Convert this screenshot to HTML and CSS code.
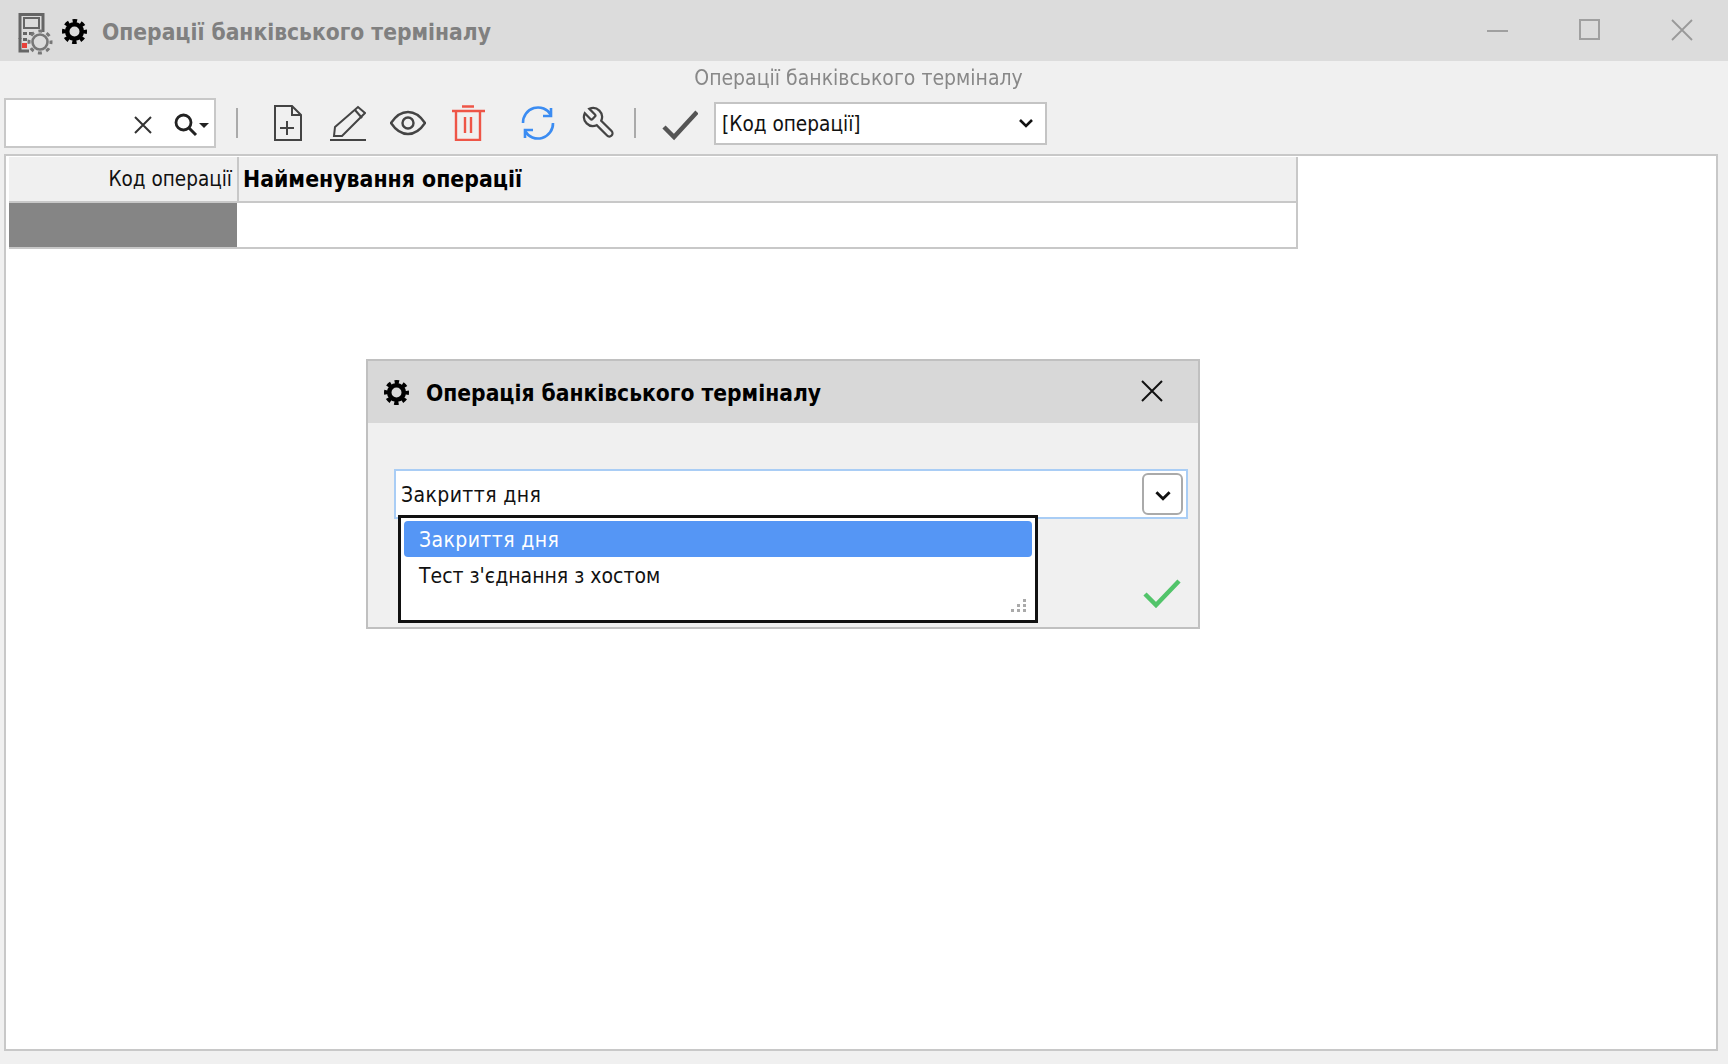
FILE: index.html
```html
<!DOCTYPE html>
<html lang="uk">
<head>
<meta charset="utf-8">
<title>Операції банківського терміналу</title>
<link rel="stylesheet" href="styles.css">
</head>
<body>
<svg class="defs" width="0" height="0" aria-hidden="true">
  <symbol id="gear" viewBox="0 0 24 24">
    <circle cx="12" cy="12" r="7" fill="none" stroke="currentColor" stroke-width="4.4"/>
    <circle cx="12" cy="12" r="10" fill="none" stroke="currentColor" stroke-width="4" stroke-dasharray="4.2 3.654" stroke-dashoffset="2.1"/>
  </symbol>
</svg>
<div class="window">
  <header class="titlebar">
    <svg class="app-icon" viewBox="0 0 36 44">
      <path d="M3 27V2.500H26V20" fill="none" stroke="#666" stroke-width="3"/>
      <path d="M3 26V39H12" fill="none" stroke="#666" stroke-width="3"/>
      <rect x="7" y="6" width="15" height="10" fill="none" stroke="#666" stroke-width="2"/>
      <path d="M6 20h4v3H6zM12 20h4v3h-4zM6 26h4v3H6z" fill="#666"/>
      <rect x="5" y="31" width="5" height="5" fill="#e8403a"/>
      <circle cx="23" cy="30" r="7.500" fill="none" stroke="#777" stroke-width="2.600"/>
      <circle cx="23" cy="30" r="11" fill="none" stroke="#777" stroke-width="3" stroke-dasharray="4 4.64" stroke-dashoffset="2"/>
    </svg>
    <svg class="title-gear"><use href="#gear"/></svg>
    <span class="title-text">Операції банківського терміналу</span>
    <div class="win-controls">
      <span class="win-min"></span>
      <span class="win-max"></span>
      <svg class="win-close" viewBox="0 0 22 22"><path d="M1 1L21 21M21 1L1 21" stroke="#999" stroke-width="1.800"/></svg>
    </div>
  </header>

  <div class="subtitle">Операції банківського терміналу</div>

  <div class="toolbar">
    <div class="search">
      <svg class="search-x" viewBox="0 0 20 20"><path d="M2 2L18 18M18 2L2 18" stroke="#333" stroke-width="2"/></svg>
      <svg class="search-glass" viewBox="0 0 24 24"><circle cx="9.500" cy="9.500" r="7.500" fill="none" stroke="#222" stroke-width="2.800"/><path d="M15 15L22 22" stroke="#222" stroke-width="3"/></svg>
      <span class="search-caret"></span>
    </div>
    <span class="sep sep-a"></span>
    <svg class="tool t-new" viewBox="0 0 36 36" fill="none" stroke="#444" stroke-width="2">
      <path d="M5 1H22L31 10V35H5Z"/><path d="M22 1V10H31"/><path d="M17 16V30M10 23H24"/>
    </svg>
    <svg class="tool t-edit" viewBox="0 0 36 36" fill="none" stroke="#444" stroke-width="2">
      <path d="M5 22L28 2L35 8L12 31H4Z"/><path d="M25 5L32 13"/><path d="M0 35H36"/>
    </svg>
    <svg class="tool t-view" viewBox="0 0 36 36" fill="none" stroke="#444" stroke-width="2.400">
      <path d="M1 18C7 9 13 7 18 7S29 9 35 18C29 27 23 29 18 29S7 27 1 18Z"/><circle cx="18" cy="18" r="5.500"/>
    </svg>
    <svg class="tool t-del" viewBox="0 0 36 36" fill="none" stroke="#ee5547" stroke-width="2.400">
      <path d="M2 6H35M12 1.500H24"/><path d="M6 6V35H30V6"/><path d="M15 12V28M21 12V28"/>
    </svg>
    <svg class="tool t-ref" viewBox="0 0 36 36" fill="none" stroke="#3b8cf2" stroke-width="2.600">
      <path d="M3 18A15 15 0 0 1 31 10"/><path d="M31 3V11H23"/><path d="M33 18A15 15 0 0 1 5 26"/><path d="M5 33V25H13"/>
    </svg>
    <svg class="tool t-wrench" viewBox="0 0 36 36" fill="none" stroke="#444" stroke-width="2.200">
      <g transform="translate(36 0) scale(-1.500 1.500)"><path stroke-width="1.500" d="M14.700 6.300a1 1 0 0 0 0 1.400l1.600 1.600a1 1 0 0 0 1.400 0l3.770-3.770a6 6 0 0 1-7.940 7.940l-6.910 6.910a2.120 2.120 0 0 1-3-3l6.910-6.910a6 6 0 0 1 7.940-7.940l-3.760 3.760z"/></g>
    </svg>
    <span class="sep sep-b"></span>
    <svg class="tool t-apply" viewBox="0 0 36 36" fill="none" stroke="#555" stroke-width="4.500">
      <path d="M2 22L12 32L35 7"/>
    </svg>
    <div class="field-select">
      <span class="field-value">[Код операції]</span>
      <svg class="chev" viewBox="0 0 16 10"><path d="M2 2L8 8L14 2" fill="none" stroke="#111" stroke-width="2.600"/></svg>
    </div>
  </div>

  <main class="frame">
    <div class="table">
      <div class="thead">
        <div class="th th-code">Код операції</div>
        <div class="th th-name">Найменування операції</div>
      </div>
      <div class="trow">
        <div class="td-code"></div>
        <div class="td-name"></div>
      </div>
    </div>
  </main>

  <section class="dialog">
    <div class="dialog-head">
      <svg class="dialog-gear"><use href="#gear"/></svg>
      <span class="dialog-title">Операція банківського терміналу</span>
      <svg class="dialog-close" viewBox="0 0 22 22"><path d="M1 1L21 21M21 1L1 21" stroke="#111" stroke-width="2"/></svg>
    </div>
    <div class="dialog-body">
      <div class="combo">
        <span class="combo-value">Закриття дня</span>
        <span class="combo-btn"><svg class="chev-lg" viewBox="0 0 16 10"><path d="M2 2L8 8L14 2" fill="none" stroke="#111" stroke-width="2.600"/></svg></span>
      </div>
      <svg class="ok" viewBox="0 0 38 30" fill="none" stroke="#52c46a" stroke-width="4.500"><path d="M2 16L13 27L36 3"/></svg>
    </div>
    <div class="dropdown">
      <div class="opt opt-active">Закриття дня</div>
      <div class="opt">Тест з'єднання з хостом</div>
      <svg class="grip" viewBox="0 0 16 14" fill="#aaa"><path d="M12 0h3v3h-3zM6 5h3v3H6zM12 5h3v3h-3zM0 10h3v3H0zM6 10h3v3H6zM12 10h3v3h-3z"/></svg>
    </div>
  </section>
</div>
</body>
</html>
```
FILE: styles.css
```css
* { box-sizing: border-box; }
html, body { margin: 0; height: 100%; }
body {
  background: #f0f0f0;
  color: #111;
  font-family: "DejaVu Sans", "Liberation Sans", sans-serif;
  font-stretch: condensed;
  font-size: 21px;
  overflow: hidden;
}
.defs { position: absolute; }
.window {
  position: relative;
  display: flex;
  flex-direction: column;
  height: 1064px;
  filter: blur(0.5px);
}

/* title bar */
.titlebar {
  display: flex;
  align-items: center;
  height: 61px;
  padding-left: 17px;
  background: #dcdcdc;
}
.app-icon { width: 36px; height: 44px; margin-top: 7px; flex: none; }
.title-gear { width: 25px; height: 25px; margin-left: 9px; margin-top: 1px; color: #000; flex: none; }
.title-text {
  margin-left: 15px;
  margin-top: 2px;
  color: #808080;
  font-weight: 700;
  font-size: 22.6px;
}
.win-controls {
  display: flex;
  align-items: center;
  margin-left: auto;
  height: 100%;
  padding-right: 35px;
  padding-bottom: 2px;
}
.win-min { width: 21px; height: 2px; background: #a0a0a0; margin-top: 3px; }
.win-max { width: 21px; height: 21px; border: 2px solid #a0a0a0; margin-left: 71px; }
.win-close { width: 22px; height: 22px; margin-left: 71px; }

/* subtitle */
.subtitle {
  height: 37px;
  padding: 0 11px 3px 0;
  display: flex;
  align-items: center;
  justify-content: center;
  color: #888;
}

/* toolbar */
.toolbar {
  display: flex;
  align-items: center;
  height: 50px;
  padding-left: 4px;
}
.search {
  display: flex;
  align-items: center;
  width: 212px;
  height: 50px;
  padding-top: 4px;
  background: #fff;
  border: 2px solid #c8c8c8;
}
.search-x { width: 20px; height: 20px; margin-left: 127px; flex: none; }
.search-glass { width: 24px; height: 24px; margin-left: 21px; flex: none; }
.search-caret {
  width: 0; height: 0;
  flex: none;
  margin-left: 1px;
  border: 5px solid transparent;
  border-top: 5px solid #222;
  border-bottom: 0;
}
.sep { width: 2px; height: 30px; background: #aaa; flex: none; }
.sep-a { margin-left: 20px; }
.sep-b { margin-left: 17px; }
.tool { width: 36px; height: 36px; flex: none; }
.t-new { margin-left: 32px; }
.t-edit { margin-left: 24px; }
.t-view { margin-left: 24px; }
.t-del { margin-left: 24px; }
.t-ref { margin-left: 34px; }
.t-wrench { margin-left: 25px; }
.t-apply { margin-left: 26px; }
.field-select {
  display: flex;
  align-items: center;
  justify-content: space-between;
  width: 333px;
  height: 43px;
  margin-left: 16px;
  padding: 0 11px 0 6px;
  background: #fff;
  border: 2px solid #c4c4c4;
}
.field-value { font-size: 20.6px; margin-top: 2px; }
.chev { width: 16px; height: 10px; flex: none; }
.chev-lg { width: 18px; height: 11px; flex: none; }

/* grid */
.frame {
  flex: 1;
  margin: 6px 10px 13px 4px;
  padding: 1px 0 0 3px;
  background: #fff;
  border: 2px solid #c8c8c8;
}
.table { width: 1289px; border-right: 2px solid #c8c8c8; }
.thead { display: flex; height: 46px; background: #f0f0f0; border-bottom: 2px solid #c8c8c8; }
.th { display: flex; align-items: center; }
.th-code {
  width: 230px;
  justify-content: flex-end;
  padding-right: 5px;
  font-size: 20.5px;
  border-right: 2px solid #c8c8c8;
}
.th-name { padding-left: 4px; font-weight: 700; color: #000; font-size: 22.8px; }
.trow { display: flex; height: 46px; border-bottom: 2px solid #c8c8c8; }
.td-code { width: 228px; background: #858585; }
.td-name { flex: 1; background: #fff; }

/* dialog */
.dialog {
  position: absolute;
  left: 366px;
  top: 359px;
  width: 834px;
  height: 270px;
  background: #f0f0f0;
  border: 2px solid #c0c0c0;
}
.dialog-head {
  display: flex;
  align-items: center;
  height: 62px;
  padding-left: 16px;
  background: #d8d8d8;
}
.dialog-gear { width: 25px; height: 25px; color: #000; flex: none; }
.dialog-title { margin-left: 17px; margin-top: 2px; font-weight: 700; color: #000; font-size: 22.6px; }
.dialog-close { width: 22px; height: 22px; margin-left: auto; margin-right: 35px; margin-bottom: 2px; }
.dialog-body { display: flex; flex-direction: column; padding: 46px 10px 0 26px; }
.combo {
  display: flex;
  align-items: center;
  justify-content: space-between;
  width: 794px;
  height: 50px;
  padding: 0 3px 0 5px;
  background: #fff;
  letter-spacing: 0.4px;
  border: 2px solid #a9cdf5;
}
.combo-value { margin-top: 2px; }
.combo-btn {
  display: flex;
  align-items: center;
  justify-content: center;
  width: 41px;
  height: 42px;
  padding-top: 2px;
  background: #fff;
  border: 2px solid #aaa;
  border-radius: 6px;
}
.ok { width: 38px; height: 30px; margin: 59px 7px 0 auto; }
.dropdown {
  position: absolute;
  left: 30px;
  top: 154px;
  width: 640px;
  height: 108px;
  padding: 3px;
  background: #fff;
  border: 3px solid #111;
}
.opt { display: flex; align-items: center; height: 36px; padding: 1px 0 0 15px; }
.opt-active { background: #5596f5; color: #fff; border-radius: 4px; letter-spacing: 0.4px; }
.grip { position: absolute; right: 8px; bottom: 7px; width: 16px; height: 14px; }
```
